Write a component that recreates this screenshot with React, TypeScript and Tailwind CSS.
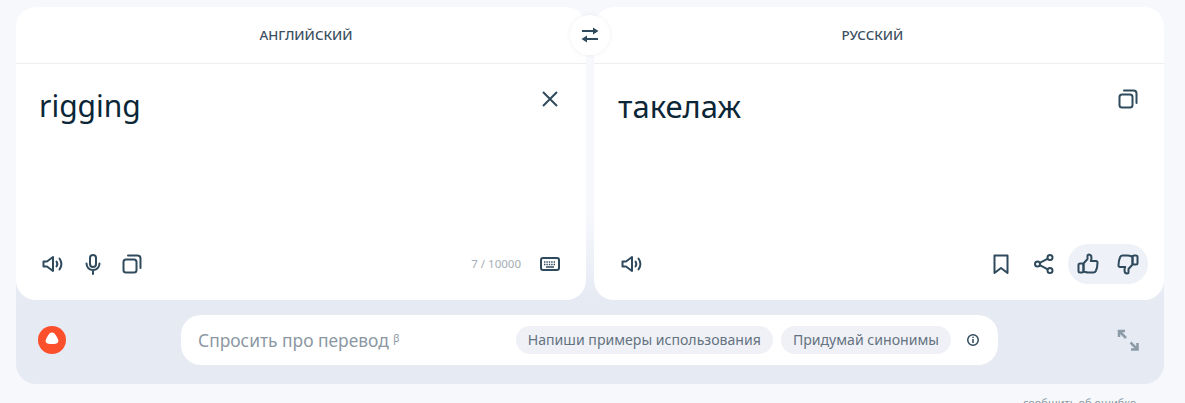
import React from 'react';

const iconClass = 'w-6 h-6 text-[#2f4a5c]';

const Speaker = () => (
    <svg className={iconClass} viewBox="0 0 24 24" fill="none" stroke="currentColor" strokeWidth={2} strokeLinejoin="round" strokeLinecap="round">
        <path d="M2.500 9.500v5h3.500l6 4.500V5l-6 4.500H2.500z" />
        <path d="M15.500 9.500c1 1.500 1 3.500 0 5" />
        <path d="M18.500 6.500c2.300 3.300 2.300 7.700 0 11" />
    </svg>
);

const Mic = () => (
    <svg className={iconClass} viewBox="0 0 24 24" fill="none" stroke="currentColor" strokeLinecap="round" strokeWidth={2}>
        <rect x="9" y="3" width="6" height="12" rx="3" />
        <path d="M5.500 11.500c0 3.800 2.900 6.500 6.500 6.500s6.500-2.700 6.500-6.500M12 18v4" />
    </svg>
);

const Copy = () => (
    <svg className={iconClass} viewBox="0 0 24 24" fill="none" stroke="currentColor" strokeWidth={2} strokeLinecap="round">
        <rect x="3.500" y="7.500" width="13" height="13" rx="2.500" />
        <path d="M8 3.500h9.500a3 3 0 0 1 3 3V16" />
    </svg>
);

const Keyboard = () => (
    <svg className={iconClass} viewBox="0 0 24 24" fill="none" stroke="currentColor">
        <rect x="3" y="6" width="18" height="12" rx="2" strokeWidth={2} />
        <path d="M6 10h12M6 12.500h12" strokeWidth={1.500} strokeDasharray="1.400 1" />
        <path d="M8 15h8" strokeWidth={1.500} />
    </svg>
);

const Bookmark = () => (
    <svg className={iconClass} viewBox="0 0 24 24" fill="none" stroke="currentColor" strokeWidth={2} strokeLinejoin="round">
        <path d="M5.500 3.500h13V21L12 16l-6.500 5V3.500z" />
    </svg>
);

const Share = () => (
    <svg className={iconClass} viewBox="0 0 24 24" fill="none" stroke="currentColor" strokeWidth={2}>
        <circle cx="5.500" cy="12" r="2.500" />
        <circle cx="18" cy="5.500" r="2.500" />
        <circle cx="18" cy="18.500" r="2.500" />
        <path d="M7.800 10.800l8-4.200M7.800 13.200l8 4.200" />
    </svg>
);

const ThumbUp = () => (
    <svg className={iconClass} viewBox="0 0 24 24" fill="none" stroke="currentColor" strokeWidth={2} strokeLinejoin="round">
        <path d="M7.500 11.500l4-4.500V4c0-1 .7-1.500 1.500-1.500 1.500 0 2.500 1.500 2.500 3.500 0 1-.3 2-.7 3H20c1 0 1.500.7 1.500 1.700 0 3-.7 6.300-1.700 8.300-.4.800-1 1.500-2.300 1.500H12c-2 0-3-1-4.500-1v-8z" />
        <rect x="2.500" y="11.500" width="5" height="9" rx="1.500" />
    </svg>
);

const ThumbDown = () => (
    <svg className={iconClass} viewBox="0 0 24 24" fill="none" stroke="currentColor" strokeWidth={2} strokeLinejoin="round">
        <path d="M16.500 12.500l-4 4.500v3c0 1-.7 1.500-1.500 1.500-1.500 0-2.500-1.500-2.500-3.500 0-1 .3-2 .7-3H4c-1 0-1.500-.7-1.500-1.700 0-3 .7-6.300 1.700-8.300.4-.8 1-1.500 2.300-1.500H12c2 0 3 1 4.500 1v8z" />
        <rect x="16.500" y="3.500" width="5" height="9" rx="1.500" />
    </svg>
);

const IconButton: React.FC<{ children: React.ReactNode }> = ({ children }) => (
    <div className="w-10 h-10 flex items-center justify-center shrink-0">{children}</div>
);

const Chip: React.FC<{ label: string }> = ({ label }) => (
    <div className="h-7 px-3 flex items-center rounded-full bg-[#eff1f7] text-[14.100px] text-[#65727f] whitespace-nowrap">{label}</div>
);

export default function App() {
    return (
        <div className="h-[403px] overflow-hidden bg-[#f6f8fc] text-[#0b2636]" style={{ fontFamily: '"Noto Sans", sans-serif' }}>
            <div className="pt-[7px] px-4 w-[1180px]">
                <div className="w-[1148px] rounded-b-[20px] bg-[#e6eaf3]">
                    <div className="relative flex gap-2 bg-gradient-to-b from-[#f6f8fc] from-70% to-[#e6eaf3]">
                        <section className="w-[570px] h-[293px] flex flex-col bg-white rounded-[20px]">
                            <div className="h-[57px] shrink-0 flex items-center justify-center pl-[10px] border-b border-[#eceef2] text-[13.400px] font-medium text-[#3b4f5e]">АНГЛИЙСКИЙ</div>
                            <div className="flex-1 flex justify-between pl-[23px] pr-6 pt-[19px]">
                                <div className="text-[30px] leading-[46px]">rigging</div>
                                <svg className="w-6 h-6 mt-[4px] text-[#2f4a5c]" viewBox="0 0 24 24" fill="none" stroke="currentColor" strokeWidth={2}>
                                    <path d="M5 5l14 14M19 5L5 19" />
                                </svg>
                            </div>
                            <div className="flex items-center h-10 pl-[17px] pr-4 mb-4">
                                <IconButton><Speaker /></IconButton>
                                <IconButton><Mic /></IconButton>
                                <div className="-ml-px"><IconButton><Copy /></IconButton></div>
                                <div className="ml-auto mr-[9px] text-[11.500px] text-[#a3adb5]">7 / 10000</div>
                                <IconButton><Keyboard /></IconButton>
                            </div>
                        </section>
                        <section className="w-[570px] h-[293px] flex flex-col bg-white rounded-[20px]">
                            <div className="h-[57px] shrink-0 flex items-center justify-center pr-[13px] border-b border-[#eceef2] text-[13.400px] font-medium text-[#3b4f5e]">РУССКИЙ</div>
                            <div className="flex-1 flex justify-between pl-6 pr-6 pt-[19px]">
                                <div className="text-[31px] leading-[46px]">такелаж</div>
                                <div className="mt-[4px]"><Copy /></div>
                            </div>
                            <div className="flex items-center h-10 pl-[18px] pr-4 mb-4">
                                <IconButton><Speaker /></IconButton>
                                <div className="ml-auto mr-1 flex">
                                    <div className="mr-[3px]"><IconButton><Bookmark /></IconButton></div>
                                    <IconButton><Share /></IconButton>
                                </div>
                                <div className="flex rounded-full bg-[#eef1f8]">
                                    <IconButton><ThumbUp /></IconButton>
                                    <IconButton><ThumbDown /></IconButton>
                                </div>
                            </div>
                        </section>
                        <div className="absolute left-[554px] top-[8px] w-10 h-10 flex items-center justify-center rounded-full bg-white shadow-[0_0_4px_rgba(30,50,80,0.08)]">
                            <svg className={iconClass} viewBox="0 0 24 24" fill="none" stroke="currentColor" strokeWidth={2}>
                                <path d="M4 8h12M20 16H8" />
                                <path d="M15 4.500v7L20.500 8zM9 12.500v7L3.500 16z" fill="currentColor" stroke="none" />
                            </svg>
                        </div>
                    </div>
                    <div className="h-[84px] flex items-center pl-[22px] pr-6 pb-1">
                        <svg className="w-7 h-7 shrink-0" viewBox="0 0 28 28">
                            <circle cx="14" cy="14" r="14" fill="#fc4f2c" />
                            <path d="M14 6.500c2 0 3.200 1.600 4.600 4.100 1.300 2.300 2.400 4.200 1.400 5.800-.9 1.300-3.300 1.500-6 1.500s-5.100-.2-6-1.500c-1-1.600.1-3.500 1.400-5.800C10.800 8.100 12 6.500 14 6.500z" fill="#fff" />
                        </svg>
                        <div className="ml-[115px] w-[817px] h-[50px] shrink-0 flex items-center bg-white rounded-[20px] pl-[17px] pr-[17px]">
                            <div className="text-[17.400px] text-[#8b98a3] whitespace-nowrap">Спросить про перевод <sup className="text-[10px]">β</sup></div>
                            <div className="ml-auto flex items-center gap-2">
                                <Chip label="Напиши примеры использования" />
                                <Chip label="Придумай синонимы" />
                            </div>
                            <svg className="w-4 h-4 ml-[14px] text-[#2f4a5c]" viewBox="0 0 16 16" fill="none" stroke="currentColor" strokeWidth={1.500}>
                                <circle cx="8" cy="8" r="5.250" />
                                <path d="M8 7v4M8 4.800v1.200" />
                            </svg>
                        </div>
                        <svg className="ml-auto w-6 h-6 text-[#8d9aa8]" viewBox="0 0 24 24" fill="none" stroke="currentColor" strokeWidth={2.500}>
                            <path d="M9 3H3v6M3 3l7 7" />
                            <path d="M21.500 15v6.500H15M21.500 21.500l-7-7" />
                        </svg>
                    </div>
                </div>
                <div className="mt-[11px] text-right pr-[28px] text-[11px] text-[#8b98a3]">сообщить об ошибке</div>
            </div>
        </div>
    );
}
